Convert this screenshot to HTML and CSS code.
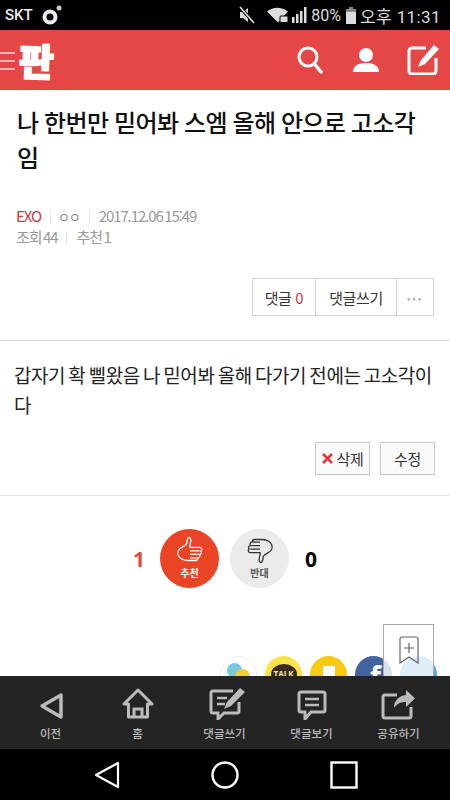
FILE: index.html

```html
<!DOCTYPE html>
<html lang="ko">
<head>
  <meta charset="UTF-8" />
  <meta name="viewport" content="width=device-width, initial-scale=1.0"/>
  <title>판</title>
  <link rel="stylesheet" href="styles.css">
</head>
<body>
  <div class="status">
    <div class="status-left">
      <span>SKT</span>
      <svg width="22" height="22" viewBox="0 0 22 22"><circle cx="9" cy="13" r="5.5" fill="none" stroke="#eee" stroke-width="4"/><circle cx="18" cy="4" r="2.5" fill="#ccc"/></svg>
    </div>
    <div class="status-right">
      <svg width="18" height="18" viewBox="0 0 18 18"><path d="M2 6h3l5-4v14l-5-4H2z" fill="#ddd"/><path d="M2 1l14 16" stroke="#000" stroke-width="3.5"/><path d="M2 1l14 16" stroke="#ddd" stroke-width="1.6"/></svg>
      <svg class="ml-wifi" width="22" height="16" viewBox="0 0 22 16"><path d="M0 4.5Q10-3 21 4.500L11 15.500z" fill="#ddd"/><rect x="13" y="9" width="8" height="6.500" rx="1" fill="#ddd" stroke="#000"/></svg>
      <svg width="16" height="16" viewBox="0 0 16 16"><path d="M1 10h2.500v6H1zM5 7h2.500v9H5zM9 4h2.500v12H9zM13 0h2.500v16H13z" fill="#ddd"/></svg>
      <span class="battery-pct">80%</span>
      <svg width="10" height="17" viewBox="0 0 10 17"><rect x="3" y="0" width="4" height="2" fill="#888"/><rect x="0" y="2" width="10" height="3" fill="#888"/><rect x="0" y="5" width="10" height="12" fill="#ddd"/></svg>
      <span class="clock">오후 11:31</span>
    </div>
  </div>

  <header class="topbar">
    <div class="brand">
      <svg class="brand-menu" width="15" height="20" viewBox="0 0 15 20"><path d="M0 2h15M0 10h15M0 18h15" stroke="#f3b7b7" stroke-width="2"/></svg>
      <span class="brand-logo">판</span>
    </div>
    <div class="top-icons">
      <svg class="icon-search" width="26" height="28" viewBox="0 0 26 28"><circle cx="11" cy="11" r="9" fill="none" stroke="#fff" stroke-width="3"/><path d="M17.500 18l6.500 8" stroke="#fff" stroke-width="3.500" stroke-linecap="round"/></svg>
      <svg width="26" height="26" viewBox="0 0 26 26"><circle cx="13" cy="8" r="7" fill="#fff"/><path d="M0 25c0-6 5-8 9-9h8c4 1 9 3 9 9z" fill="#fff"/></svg>
      <svg width="32" height="30" viewBox="0 0 32 30"><path d="M19 3H5a3 3 0 0 0-3 3v20a3 3 0 0 0 3 3h21a3 3 0 0 0 3-3V13" fill="none" stroke="#fff" stroke-width="3"/><path d="M27 0l5 4-14 15-7 3 3-7z" fill="#fff"/></svg>
    </div>
  </header>

  <main class="content">
    <h1 class="title">나 한번만 믿어봐 스엠 올해 안으로 고소각임</h1>
    <div class="meta">
      <div><a class="meta-cat">EXO</a><i class="sep"></i><span class="meta-nick">ㅇㅇ</span><i class="sep"></i><span>2017.12.06 15:49</span></div>
      <div><span>조회 44</span><i class="sep"></i><span>추천 1</span></div>
    </div>
    <div class="tools">
      <div class="tool-group">
        <span class="tool tool-count">댓글 <em>0</em></span>
        <span class="tool tool-write">댓글쓰기</span>
        <span class="tool tool-more">•••</span>
      </div>
    </div>
    <div class="post">
      <p>갑자기 확 삘왔음 나 믿어봐 올해 다가기 전에는 고소각이다</p>
      <div class="post-actions">
        <span class="act act-del"><svg width="11" height="11" viewBox="0 0 11 11"><path d="M1 1l9 9M10 1l-9 9" stroke="#e5343c" stroke-width="2.600"/></svg>삭제</span>
        <span class="act act-edit">수정</span>
      </div>
    </div>
    <div class="vote">
      <span class="vote-num up">1</span>
      <div class="vote-btn vote-up">
        <svg width="28" height="28" viewBox="0 0 32 32"><path d="M14 2c2-1 3 1 3 3 0 3-2 6-1 8h11c3 0 3 4 1 4 2 1 1 4-1 4 1 2 0 4-2 4 0 2-1 3-3 3H13c-3 0-5-1-7-2-3-2-5-6-3-10 2-3 7-4 9-7 1-2 0-4 2-7z" fill="none" stroke="#fff" stroke-width="1.500"/><path d="M16 17h11M16 21h10M16 25h8" stroke="#fff" stroke-width="1.300"/></svg>
        <span>추천</span>
      </div>
      <div class="vote-btn vote-down">
        <svg width="28" height="28" viewBox="0 0 32 32"><path d="M18 30c-2 1-3-1-3-3 0-3 2-6 1-8H5c-3 0-3-4-1-4-2-1-1-4 1-4-1-2 0-4 2-4 0-2 1-3 3-3h9c3 0 5 1 7 2 3 2 5 6 3 10-2 3-7 4-9 7-1 2 0 4-2 7z" fill="none" stroke="#333" stroke-width="1.500"/><path d="M16 15H5M16 11H6M16 7H8" stroke="#333" stroke-width="1.300"/></svg>
        <span>반대</span>
      </div>
      <span class="vote-num down">0</span>
    </div>

    <div class="share">
      <span class="share-item share-pick"><i class="dot-blue"></i><i class="dot-yellow"></i></span>
      <span class="share-item share-talk"><span>TALK</span></span>
      <span class="share-item share-story"><i></i></span>
      <span class="share-item share-fb">f</span>
      <span class="share-item share-tw"></span>
    </div>
    <div class="bookmark">
      <svg width="20" height="28" viewBox="0 0 20 28"><path d="M1 27V3a2 2 0 0 1 2-2h14a2 2 0 0 1 2 2v24l-9-6z" fill="none" stroke="#666" stroke-width="1.200"/><path d="M10 7v10M5 12h10" stroke="#666" stroke-width="1.200"/></svg>
    </div>
  </main>

  <nav class="tabbar">
    <div class="tab">
      <svg width="28" height="28" viewBox="0 0 28 28"><path d="M24 3v22L5 14z" fill="none" stroke="#bbb" stroke-width="3.500" stroke-linejoin="round"/></svg>
      <span>이전</span>
    </div>
    <div class="tab">
      <svg width="32" height="32" viewBox="0 0 32 32"><path d="M16 2L2 16h4.500v13h19V16H30z" fill="none" stroke="#bbb" stroke-width="3" stroke-linejoin="round"/><path d="M12 29v-8h8v8" fill="none" stroke="#bbb" stroke-width="3"/></svg>
      <span>홈</span>
    </div>
    <div class="tab">
      <svg class="icon-write" width="36" height="32" viewBox="0 0 36 32"><path d="M24 3H4a2 2 0 0 0-2 2v18a2 2 0 0 0 2 2h5v6l6-6h13a2 2 0 0 0 2-2V14" fill="none" stroke="#bbb" stroke-width="3"/><path d="M8 10h10M8 16h8" stroke="#bbb" stroke-width="2.500"/><path d="M31 0l5 4-14 14-7 3 3-7z" fill="#bbb"/></svg>
      <span>댓글쓰기</span>
    </div>
    <div class="tab">
      <svg width="30" height="30" viewBox="0 0 30 30"><path d="M4 2h22a2 2 0 0 1 2 2v16a2 2 0 0 1-2 2H14l-6 7v-7H4a2 2 0 0 1-2-2V4a2 2 0 0 1 2-2z" fill="none" stroke="#bbb" stroke-width="3"/><path d="M8 9h14M8 15h14" stroke="#bbb" stroke-width="2.500"/></svg>
      <span>댓글보기</span>
    </div>
    <div class="tab">
      <svg width="36" height="30" viewBox="0 0 36 30"><path d="M16 5H4a2 2 0 0 0-2 2v19a2 2 0 0 0 2 2h24a2 2 0 0 0 2-2v-9" fill="none" stroke="#bbb" stroke-width="3"/><path d="M25 0l9 8.500-9 8.500v-5c-6 0-9 2-12 6 0-8 5-12 12-13z" fill="#bbb"/></svg>
      <span>공유하기</span>
    </div>
  </nav>

  <div class="softkeys">
    <svg width="26" height="28" viewBox="0 0 26 28"><path d="M24 2v24L2 14z" fill="none" stroke="#fff" stroke-width="2.200" stroke-linejoin="round"/></svg>
    <svg width="28" height="28" viewBox="0 0 28 28"><circle cx="14" cy="14" r="12.500" fill="none" stroke="#fff" stroke-width="2.400"/></svg>
    <svg width="28" height="28" viewBox="0 0 28 28"><rect x="1.500" y="1.500" width="25" height="25" fill="none" stroke="#fff" stroke-width="2.400"/></svg>
  </div>
</body>
</html>
```

FILE: styles.css

```css
* {
  box-sizing: border-box;
}
html, body {
  margin: 0;
  height: 800px;
  overflow: hidden;
}
body {
  display: flex;
  flex-direction: column;
  font-family: "Roboto", "Noto Sans CJK KR", sans-serif;
  color: #111;
  background: #fff;
}
.status {
  height: 30px;
  flex: none;
  background: #000;
  color: #ddd;
  display: flex;
  justify-content: space-between;
  align-items: center;
  padding: 0 9px 0 5px;
}
.status-left {
  display: flex;
  align-items: center;
  gap: 8px;
  font-size: 15px;
  font-weight: 500;
  color: #eee;
}
.status-right {
  display: flex;
  align-items: center;
  gap: 2px;
  font-size: 16px;
}
.ml-wifi {
  margin-left: 9px;
}
.battery-pct {
  margin: 0 3px 0 2px;
}
.clock {
  margin-left: 2px;
  font-size: 17px;
  letter-spacing: 0.4px;
}
.topbar {
  height: 60px;
  flex: none;
  background: #e54747;
  display: flex;
  justify-content: space-between;
  align-items: center;
  padding: 0 11px 0 0;
}
.brand {
  display: flex;
  align-items: center;
}
.brand-menu {
  margin-top: 2px;
}
.brand-logo {
  font-family: "Noto Sans CJK KR", sans-serif;
  font-weight: 900;
  font-size: 38px;
  line-height: 1;
  color: #fff;
  -webkit-text-stroke: 1.5px #fff;
  transform: rotate(2deg);
  margin-left: 4px;
}
.top-icons {
  display: flex;
  align-items: center;
  gap: 28px;
}
.icon-search {
  margin-right: 2px;
}
.content {
  flex: 1;
  min-height: 0;
  position: relative;
  overflow: hidden;
}
.title {
  margin: 0;
  padding: 14px 16px 0 17px;
  font-family: "Noto Sans CJK KR", sans-serif;
  font-size: 24px;
  line-height: 35px;
  font-weight: 500;
  letter-spacing: -0.6px;
  word-spacing: -0.6px;
  color: #111;
}
.meta {
  margin-top: 32px;
  padding-left: 16px;
  font-family: "Noto Sans CJK KR", sans-serif;
  font-size: 15px;
  line-height: 20px;
  color: #999;
  letter-spacing: -1.1px;
  word-spacing: -1.5px;
}
.meta-cat {
  color: #d7323c;
}
.meta-nick {
  color: #888;
  font-size: 13px;
  margin-left: -2px;
}
.sep {
  display: inline-block;
  width: 1px;
  height: 14px;
  background: #e8e8e8;
  margin: 0 9px;
  vertical-align: -2px;
}
.tools {
  display: flex;
  justify-content: flex-end;
  padding: 31px 16px 0 0;
}
.tool-group {
  display: flex;
  height: 38px;
  border: 1px solid #d4d4d4;
  font-family: "Noto Sans CJK KR", sans-serif;
  font-size: 15px;
  color: #333;
}
.tool {
  display: flex;
  align-items: center;
  justify-content: center;
  white-space: pre;
  letter-spacing: -0.4px;
}
.tool em {
  font-style: normal;
  color: #d7323c;
}
.tool-count {
  width: 63px;
  border-right: 1px solid #d4d4d4;
}
.tool-write {
  width: 81px;
  border-right: 1px solid #d4d4d4;
}
.tool-more {
  width: 36px;
  font-size: 10px;
  letter-spacing: 2px;
  color: #aaa;
}
.post {
  margin-top: 24px;
  border-top: 1px solid #d8d8d8;
  border-bottom: 1px solid #e8e8e8;
  padding: 19px 15px 20px 14px;
}
.post p {
  margin: 0;
  font-family: "Noto Sans CJK KR", sans-serif;
  font-size: 19px;
  line-height: 30px;
  letter-spacing: -0.45px;
  word-spacing: -1.6px;
  color: #222;
}
.post-actions {
  display: flex;
  justify-content: flex-end;
  gap: 10px;
  margin-top: 22px;
}
.act {
  height: 33px;
  width: 55px;
  display: flex;
  align-items: center;
  justify-content: center;
  gap: 4px;
  border: 1px solid #c8c8c8;
  background: #fafafa;
  font-family: "Noto Sans CJK KR", sans-serif;
  font-size: 15px;
  letter-spacing: -0.4px;
  color: #333;
}
.vote {
  display: flex;
  justify-content: center;
  align-items: center;
  gap: 11px;
  margin-top: 33px;
}
.vote-num {
  width: 16px;
  text-align: center;
  font-family: "Open Sans", sans-serif;
  font-size: 21px;
  font-weight: 700;
  color: #000;
}
.vote-num.up {
  margin-right: 2px;
  color: #e04c3c;
}
.vote-num.down {
  margin-left: 3px;
}
.vote-btn {
  width: 59px;
  height: 59px;
  border-radius: 50%;
  display: flex;
  flex-direction: column;
  align-items: center;
  padding-top: 7px;
  gap: 2px;
  font-family: "Noto Sans CJK KR", sans-serif;
  font-size: 10px;
  font-weight: 700;
  line-height: 14px;
}
.vote-up {
  background: #ea4426;
  color: #fff;
}
.vote-down {
  background: #ebebeb;
  color: #555;
}
.share {
  position: absolute;
  left: 220px;
  bottom: -17px;
  display: flex;
  gap: 8px;
}
.share-item {
  width: 37px;
  height: 37px;
  border-radius: 50%;
  position: relative;
  display: flex;
  justify-content: center;
  overflow: hidden;
}
.share-pick {
  background: #fff;
  border: 1px solid #eee;
}
.dot-blue {
  position: absolute;
  left: 6px;
  top: 6px;
  width: 15px;
  height: 15px;
  border-radius: 50%;
  background: #79c9e0;
}
.dot-yellow {
  position: absolute;
  left: 14px;
  top: 12px;
  width: 15px;
  height: 15px;
  border-radius: 50%;
  background: #f2cf2e;
}
.share-talk {
  background: #fbe34a;
}
.share-talk span {
  margin-top: 8px;
  width: 26px;
  height: 20px;
  border-radius: 50%;
  background: #3a2a20;
  color: #f5e7a0;
  font-family: "Open Sans", sans-serif;
  font-size: 8px;
  font-weight: 700;
  text-align: center;
  line-height: 20px;
}
.share-story {
  background: #f9cb10;
}
.share-story i {
  margin-top: 10px;
  width: 12px;
  height: 16px;
  background: #fff;
}
.share-fb {
  background: #41639f;
  color: #fff;
  padding-left: 4px;
  font-family: "Open Sans", sans-serif;
  font-size: 28px;
  font-weight: 700;
  line-height: 40px;
}
.share-tw {
  background: #5ba7d8;
}
.bookmark {
  position: absolute;
  right: 16px;
  bottom: -1px;
  width: 51px;
  height: 53px;
  border: 1px solid #aaa;
  background: rgba(255, 255, 255, 0.8);
  display: flex;
  justify-content: center;
  padding-top: 11px;
}
.tabbar {
  height: 73px;
  flex: none;
  background: #242424;
  display: flex;
  padding: 0 8px 0 7px;
}
.tab {
  flex: 1;
  display: flex;
  flex-direction: column;
  align-items: center;
  justify-content: flex-end;
  gap: 5px;
  padding-bottom: 8px;
  font-family: "Noto Sans CJK KR", sans-serif;
  font-size: 11.5px;
  line-height: 16px;
  font-weight: 500;
  color: #bbb;
}
.icon-write {
  margin-left: 4px;
}
.softkeys {
  height: 51px;
  flex: none;
  background: #000;
  display: flex;
  justify-content: space-between;
  align-items: center;
  padding: 0 92px 0 94px;
}
```
